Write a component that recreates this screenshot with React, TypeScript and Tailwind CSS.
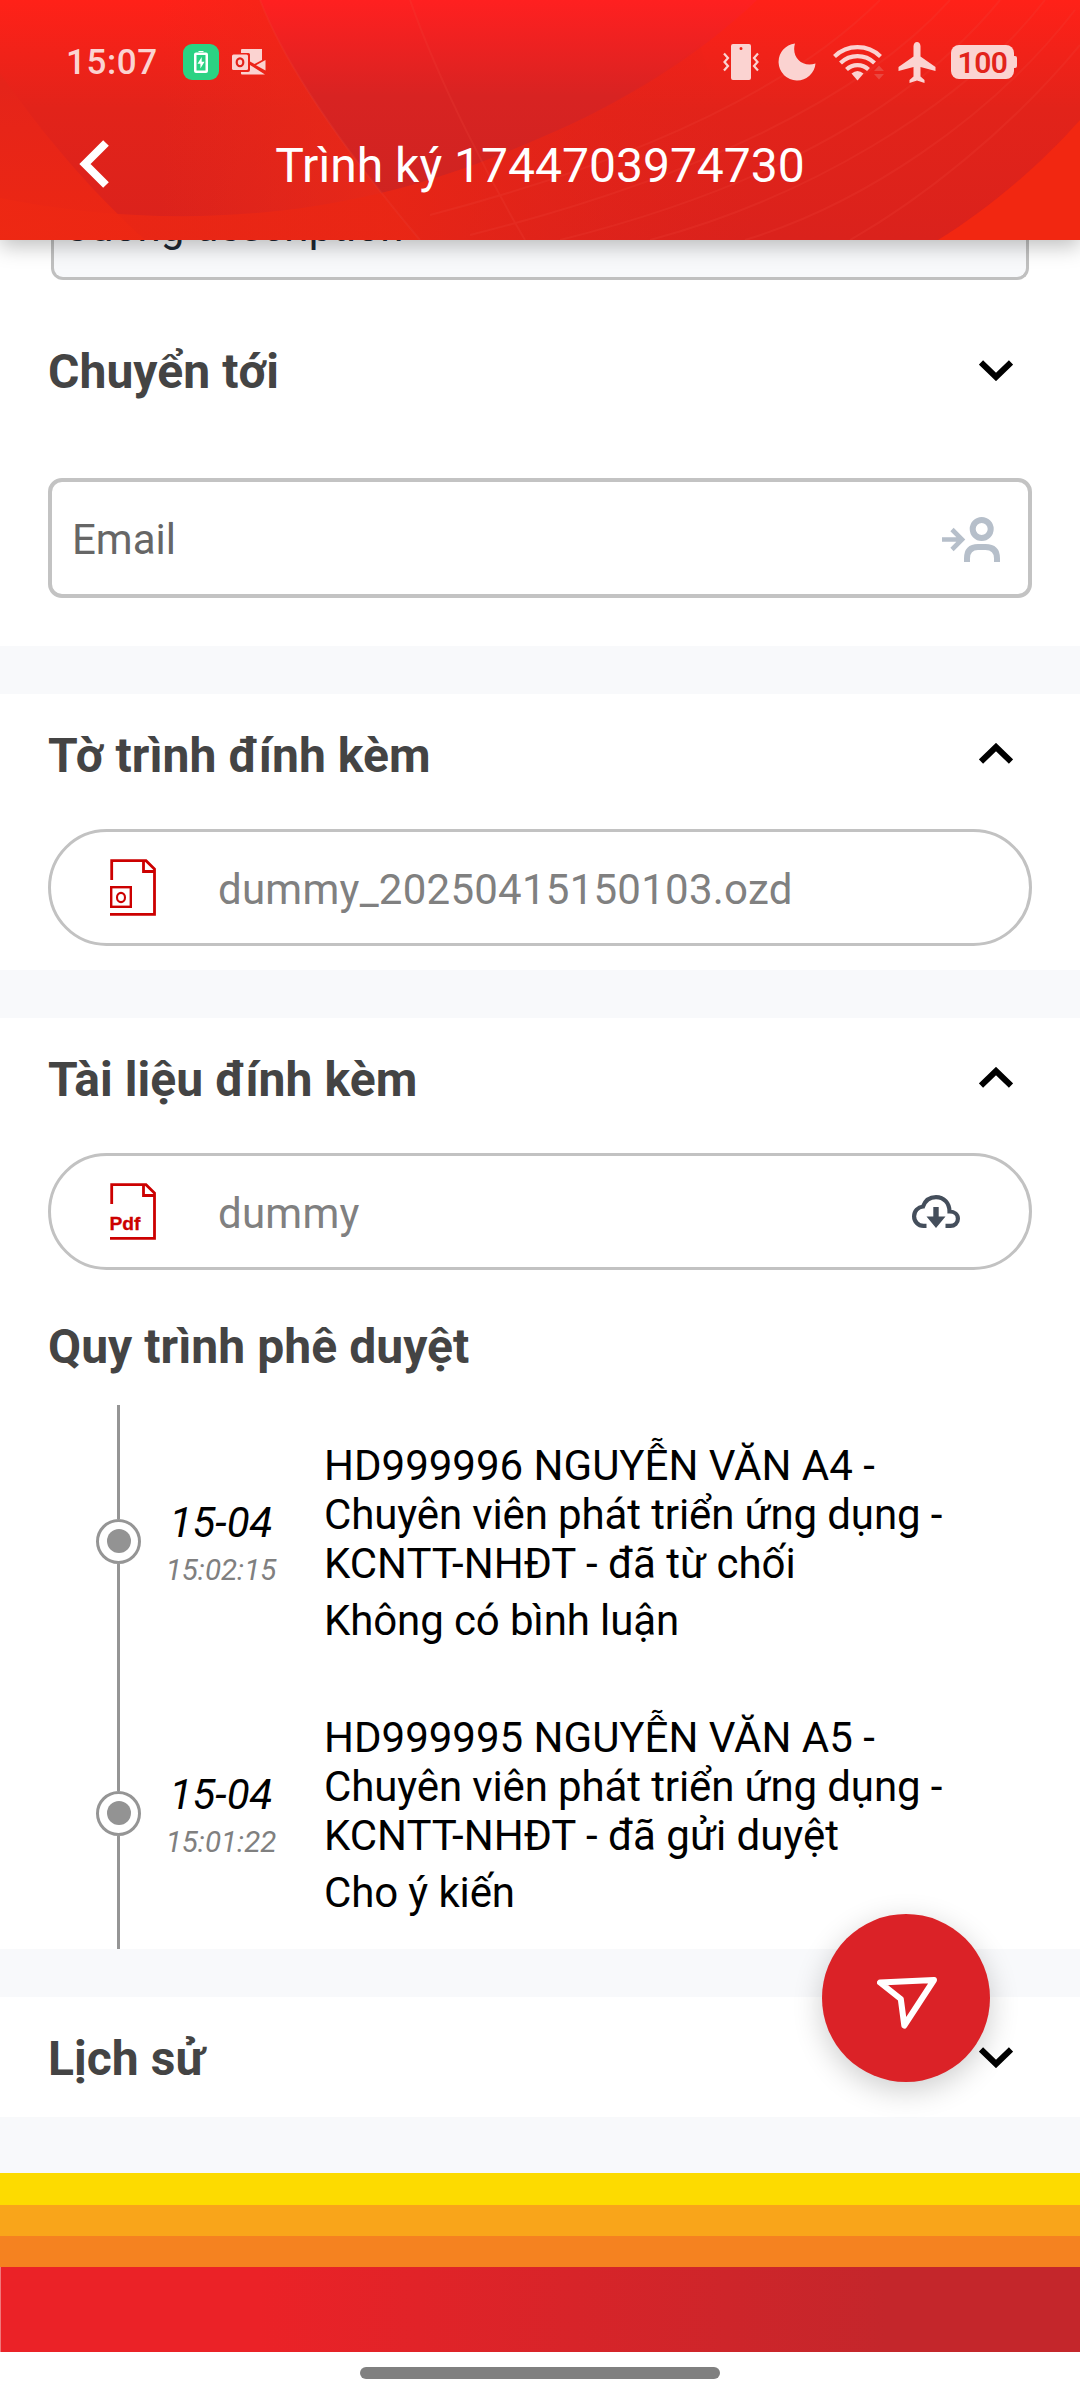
import React from "react";

const Chevron = ({ up = false }: { up?: boolean }) => (
  <svg width="34" height="21" viewBox="0 0 34 21" fill="none" className={up ? "-mt-0.5 rotate-180" : ""}>
    <path d="M2 2.500 17 17 32 2.500" stroke="#000" strokeWidth="6" />
  </svg>
);

const SectionTitle = ({ children, up, toggle = true }: { children: React.ReactNode; up?: boolean; toggle?: boolean }) => (
  <div className="flex h-[60px] items-center justify-between pl-12 pr-[67px]">
    <h2 className="pt-[3px] text-[48px] font-bold leading-[56px] tracking-[0.05px] text-[#444444]">{children}</h2>
    {toggle && <Chevron up={up} />}
  </div>
);

const Band = () => <div className="h-12 shrink-0 bg-[#f8f9fb]" />;

const FileIcon = ({ kind }: { kind: "ozd" | "pdf" }) => (
  <svg width="46" height="57" viewBox="0 0 46 57" fill="none" stroke="#cc0000" strokeWidth="2.8">
    <path d="M1.7 21V1.7H36L44.500 10V55.300H0" />
    <path d="M33.500 1.700V12.500H44.500" />
    {kind === "ozd" ? (
      <>
        <rect x="1.200" y="28.200" width="19.600" height="19.600" strokeWidth="2.400" />
        <ellipse cx="11" cy="38.500" rx="4" ry="4.600" strokeWidth="2.100" />
      </>
    ) : (
      <text x="-0.500" y="46.500" fill="#cc0000" stroke="#cc0000" strokeWidth="0.300" fontSize="19" fontWeight="700" fontFamily="Liberation Sans" textLength="31" lengthAdjust="spacingAndGlyphs">
        Pdf
      </text>
    )}
  </svg>
);

const FilePill = ({ kind, name, children }: { kind: "ozd" | "pdf"; name: string; children?: React.ReactNode }) => (
  <div className="mx-12 flex h-[117px] items-center rounded-full border-[3px] border-[#c2c2c2] pl-[59px] pr-[69px]">
    <FileIcon kind={kind} />
    <span className="ml-[62px] flex-1 pt-[3px] text-[42px] leading-[49px] tracking-[0.25px] text-[#808080]">{name}</span>
    {children}
  </div>
);

type Step = { date: string; time: string; person: string; role: string; action: string; comment: string };

const steps: Step[] = [
  {
    date: "15-04",
    time: "15:02:15",
    person: "HD999996 NGUYỄN VĂN A4 -",
    role: "Chuyên viên phát triển ứng dụng -",
    action: "KCNTT-NHĐT - đã từ chối",
    comment: "Không có bình luận",
  },
  {
    date: "15-04",
    time: "15:01:22",
    person: "HD999995 NGUYỄN VĂN A5 -",
    role: "Chuyên viên phát triển ứng dụng -",
    action: "KCNTT-NHĐT - đã gửi duyệt",
    comment: "Cho ý kiến",
  },
];

const TimelineStep = ({ step }: { step: Step }) => (
  <div className="flex h-[272px] items-center pl-[96px]">
    <div className="flex h-full w-[45px] flex-col items-center">
      <div className="w-[3px] flex-1 bg-[#959595]" />
      <div className="flex size-[45px] items-center justify-center rounded-full border-[3px] border-[#959595]">
        <div className="size-6 rounded-full bg-[#939393]" />
      </div>
      <div className="w-[3px] flex-1 bg-[#959595]" />
    </div>
    <div className="flex w-[160px] flex-col items-center pt-1 italic">
      <span className="text-[42px] leading-[49px] text-black">{step.date}</span>
      <span className="mt-1.5 text-[29.500px] leading-[35px] text-[#808080]">{step.time}</span>
    </div>
    <div className="ml-[23px] whitespace-nowrap pt-[3px] text-[42px] leading-[49px] text-black">
      <p>{step.person}</p>
      <p className="tracking-[-0.12px]">{step.role}</p>
      <p>{step.action}</p>
      <p className="mt-2 tracking-[-0.12px]">{step.comment}</p>
    </div>
  </div>
);

const HeaderArt = () => (
  <svg className="absolute inset-0" width="1080" height="240" viewBox="0 0 1080 240" preserveAspectRatio="none">
    <defs>
      <linearGradient id="base" x1="0" y1="0" x2="0" y2="240" gradientUnits="userSpaceOnUse">
        <stop offset="0" stopColor="#ff2020" />
        <stop offset="0.4" stopColor="#d82322" />
        <stop offset="1" stopColor="#cb2420" />
      </linearGradient>
      <linearGradient id="mid" x1="0" y1="0" x2="0" y2="240" gradientUnits="userSpaceOnUse">
        <stop offset="0" stopColor="#ff2118" />
        <stop offset="0.45" stopColor="#e2231a" />
        <stop offset="1" stopColor="#da221c" />
      </linearGradient>
      <linearGradient id="lit" x1="0" y1="0" x2="0" y2="240" gradientUnits="userSpaceOnUse">
        <stop offset="0" stopColor="#ff2118" />
        <stop offset="0.35" stopColor="#e5241a" />
        <stop offset="1" stopColor="#ec2713" />
      </linearGradient>
      <linearGradient id="glow" x1="160" y1="0" x2="400" y2="0" gradientUnits="userSpaceOnUse">
        <stop offset="0" stopColor="#ea2a18" stopOpacity="0" />
        <stop offset="1" stopColor="#ea2a18" stopOpacity="0.75" />
      </linearGradient>
      <linearGradient id="floor" x1="0" y1="0" x2="760" y2="0" gradientUnits="userSpaceOnUse">
        <stop offset="0" stopColor="#ee2813" stopOpacity="0.8" />
        <stop offset="0.5" stopColor="#ea2614" stopOpacity="0.8" />
        <stop offset="1" stopColor="#e2221a" stopOpacity="0" />
      </linearGradient>
    </defs>
    <rect width="1080" height="240" fill="url(#base)" />
    <path d="M0 0H260C285 65 340 145 420 240H0Z" fill="url(#mid)" />
    <path d="M0 0H260C285 65 340 145 420 240H0Z" fill="url(#glow)" />
    <path d="M0 73C40 130 85 185 145 240H0Z" fill="url(#lit)" />
    <path d="M757 0C700 55 620 105 540 138C485 162 435 180 381 193L420 240H1080V0Z" fill="url(#mid)" />
    <path d="M0 198C130 224 260 222 381 193L420 240H0Z" fill="url(#floor)" />
    <path d="M381 193C435 180 485 162 540 138C600 113 650 83 700 45L760 240H420Z" fill="url(#floor)" />
    <path d="M1080 120C1040 165 990 208 938 240H1080Z" fill="#f22711" />
    <g fill="none" stroke="#f0483c" strokeWidth="2" opacity="0.2">
      <path d="M260 0C285 65 340 145 420 240" />
      <path d="M410 0C440 85 490 180 525 240" />
      <path d="M880 0C790 90 640 160 430 215" />
      <path d="M950 0C860 100 690 180 470 235" />
      <path d="M1000 0C910 110 760 190 560 240" />
      <path d="M1045 0C960 110 800 200 650 240" />
      <path d="M1075 10C990 120 860 205 745 240" />
      <path d="M1080 45C1010 130 920 200 850 240" />
    </g>
  </svg>
);

const StatusBar = () => (
  <div className="relative flex h-[124px] items-center pl-[66px] pr-[63px]">
    <span className="text-[35px] font-medium leading-[41px] tracking-[0.6px] text-[#fbd3d1]">15:07</span>
    <svg className="ml-[25px]" width="36" height="36" viewBox="0 0 36 36">
      <rect width="36" height="36" rx="9" fill="#2bd283" />
      <path d="M15.500 7H20.500V9H15.500ZM11 10.500Q11 8.500 13 8.500H23Q25 8.500 25 10.500V27Q25 29 23 29H13Q11 29 11 27ZM13.500 11V26.500H22.500V11Z" fill="#fff" fillRule="evenodd" />
      <path d="M18.700 13 14.500 19.700H17.400V24.500L21.500 17.800H18.700Z" fill="#fff" />
    </svg>
    <svg className="ml-[13px]" width="34" height="26" viewBox="0 0 34 26">
      <path d="M10 0H30V11L22.500 15 18 12.500V5.500Q18 4 16.500 4H9V1Q9 0 10 0Z" fill="#fbd3d1" />
      <path d="M33.500 11V21.500L24 16.200ZM9 23H16Q18 23 18 21V16L33 25.500H10Q9 25.500 9 24.500Z" fill="#fbd3d1" />
      <rect y="5.500" width="16" height="15.500" rx="1.500" fill="#fbd3d1" />
      <ellipse cx="8" cy="13.300" rx="3.300" ry="3.900" fill="none" stroke="#e2231a" strokeWidth="2.200" />
    </svg>
    <div className="flex-1" />
    <svg width="36" height="36" viewBox="0 0 36 36">
      <path d="M10 0H26Q28 0 28 2V34Q28 36 26 36H10Q8 36 8 34V2Q8 0 10 0ZM18 3A1.500 1.500 0 1 0 18 6 1.500 1.500 0 1 0 18 3Z" fill="#fbd3d1" fillRule="evenodd" />
      <path d="M1 9.500 5 14 1.500 18 5 22 1 26.500M35 9.500 31 14 34.500 18 31 22 35 26.500" fill="none" stroke="#fbd3d1" strokeWidth="2.200" />
    </svg>
    <svg className="ml-[19px]" width="38" height="38" viewBox="0 0 38 38">
      <path d="M17 0.500A18.500 18.500 0 1 0 37.500 20.500C24 25 13 14 17 0.500Z" fill="#fbd3d1" />
    </svg>
    <svg className="ml-[17px]" width="51" height="37" viewBox="0 0 51 37">
      <g fill="none" stroke="#fbd3d1" strokeWidth="4.200">
        <path d="M1.500 12.500A33 33 0 0 1 47.500 12.500" />
        <path d="M7.500 19A24.500 24.500 0 0 1 41.500 19" />
        <path d="M13.500 25.500A16 16 0 0 1 35.500 25.500" />
      </g>
      <path d="M18.500 29.500Q24.500 24.500 30.500 29.500L24.500 36.500Z" fill="#fbd3d1" />
      <path d="M41 27 46 21.500 51 27ZM41 30H51L46 35.500Z" fill="#ea473f" />
    </svg>
    <svg className="ml-[14px]" width="38" height="41" viewBox="0 0 38 41">
      <path d="M15.500 4Q16 0 19 0T22.500 4V14.500L37.500 25V29L22.500 25V34.500L26.500 38V41L19 38.500 11.500 41V38L15.500 34.500V25L0.500 29V25L15.500 14.500Z" fill="#fbd3d1" />
    </svg>
    <div className="ml-[15px] flex items-center">
      <div className="flex h-[34px] w-[63px] items-center justify-center rounded-[8px] bg-[#fbd3d1] pt-0.5 text-[30px] font-semibold leading-none tracking-[-0.5px] text-[#e2231a]">100</div>
      <div className="h-3 w-[3px] rounded-r-[2px] bg-[#fbd3d1]" />
    </div>
  </div>
);

export default function App() {
  return (
    <div className="relative flex h-[2400px] w-[1080px] flex-col overflow-hidden bg-white font-['Roboto',sans-serif]">
      <header className="relative z-10 h-[240px] shrink-0 shadow-[0_6px_20px_rgba(0,0,0,0.26)]">
        <HeaderArt />
        <StatusBar />
        <div className="relative flex h-[80px] items-center justify-center">
          <svg className="absolute left-[79px] top-4" width="30" height="48" viewBox="0 0 30 48" fill="none">
            <path d="M27 3 6 24 27 45" stroke="#fff" strokeWidth="8" />
          </svg>
          <h1 className="pt-1 text-[48px] leading-[56px] text-white">Trình ký 1744703974730</h1>
        </div>
      </header>

      <div className="mx-[51px] -mt-5 flex h-[60px] shrink-0 items-start rounded-b-[12px] border-x-[3px] border-b-[3px] border-[#c0c0c0] bg-[#f8f9fb] pl-[14px] text-[42px] leading-[49px] text-[#1d2733]">
        <span className="-ml-[5px] -mt-[18px]">Cuong description</span>
      </div>

      <section className="h-[366px] shrink-0 pt-[60px]">
        <SectionTitle>Chuyển tới</SectionTitle>
        <div className="mx-12 mt-[78px] flex h-[120px] items-center justify-between rounded-[14px] border-4 border-[#c3c3c3] pl-5 pr-7">
          <span className="pt-[3px] text-[42px] leading-[49px] text-[#666666]">Email</span>
          <svg className="mt-0.5" width="58" height="45" viewBox="0 0 58 45" fill="none" stroke="#b6bfca">
            <path d="M0 22.500H19M10 12.500 20 22.500 10 32.500" strokeWidth="4.600" />
            <circle cx="39.700" cy="12" r="9" strokeWidth="6" />
            <path d="M25 45V41.500Q25 30 36 30H43.500Q55 30 55 41.500V45" strokeWidth="6" />
          </svg>
        </div>
      </section>
      <Band />

      <section className="h-[276px] shrink-0 pt-[30px]">
        <SectionTitle up>Tờ trình đính kèm</SectionTitle>
        <div className="mt-[45px]">
          <FilePill kind="ozd" name="dummy_20250415150103.ozd" />
        </div>
      </section>
      <Band />

      <section className="h-[931px] shrink-0 pt-[30px]">
        <SectionTitle up>Tài liệu đính kèm</SectionTitle>
        <div className="mt-[45px]">
          <FilePill kind="pdf" name="dummy">
            <svg width="48" height="33" viewBox="0 0 48 33">
              <path d="M14.500 30.900H11.500C6 30.900 2.100 26.500 2.100 21.300 2.100 16 6 12 11 11.500 13 6 17.500 2.100 24 2.100 32 2.100 37.500 8 37.500 16.500 42.500 16.500 45.900 19.500 45.900 23.700 45.900 28 42.500 30.900 38.500 30.900H33.500" fill="none" stroke="#444e5b" strokeWidth="4.200" />
              <path d="M21.300 12H26.700V21.500H33.500L24 33 14.500 21.500H21.300Z" fill="#444e5b" />
            </svg>
          </FilePill>
        </div>
        <div className="mt-[45px]">
          <SectionTitle toggle={false}>Quy trình phê duyệt</SectionTitle>
        </div>
        <div className="mt-[30px]">
          {steps.map((s) => (
            <TimelineStep key={s.time} step={s} />
          ))}
        </div>
      </section>
      <Band />

      <section className="h-[120px] shrink-0 pt-[30px]">
        <SectionTitle>Lịch sử</SectionTitle>
      </section>

      <footer className="shrink-0">
        <div className="h-14 bg-[#f8f9fb]" />
        <div className="h-8 bg-[#fddb00]" />
        <div className="h-[31px] bg-[#f9a51a]" />
        <div className="h-[31px] bg-[#f58220]" />
        <div className="h-[85px] border-l border-[#f0787b] bg-[linear-gradient(90deg,#eb2227_24%,#c4262b_82%)]" />
        <div className="flex h-12 justify-center pt-[15px]">
          <div className="h-3 w-[360px] rounded-full bg-[#808080]" />
        </div>
      </footer>

      <button className="absolute left-[822px] top-[1914px] flex size-[168px] items-center justify-center rounded-full bg-[#db2227] shadow-[0_8px_30px_rgba(0,0,0,0.2)]">
        <svg width="60" height="52" viewBox="0 0 60 52" fill="none" className="ml-0.5 mt-[9px]">
          <path d="M3 5.500 57 3 27.300 48.500 23.800 22Z" stroke="#fff" strokeWidth="6" strokeLinejoin="round" />
        </svg>
      </button>
    </div>
  );
}
